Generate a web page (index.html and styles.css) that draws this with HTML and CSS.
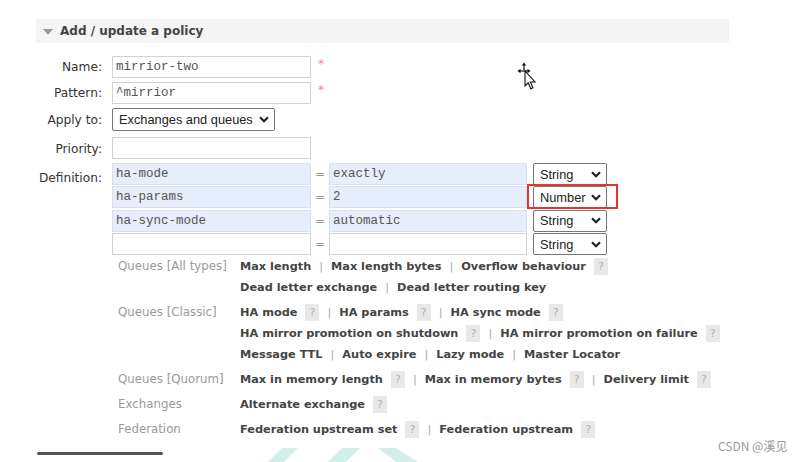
FILE: index.html
```html
<!DOCTYPE html>
<html>
<head>
<meta charset="utf-8">
<link rel="stylesheet" href="styles.css">
</head>
<body>
<div class="page">
  <section class="panel">
    <h2 class="panel-head"><span class="tri"></span>Add / update a policy</h2>

    <div class="form">
      <div class="lbl">Name:</div>
      <div class="field"><div class="txt mono w200">mirrior-two</div><span class="req">*</span></div>

      <div class="lbl">Pattern:</div>
      <div class="field"><div class="txt mono w200">^mirrior</div><span class="req">*</span></div>

      <div class="lbl">Apply to:</div>
      <div class="field"><div class="sel wide"><span>Exchanges and queues</span><svg class="chev" width="10" height="7" viewBox="0 0 10 7"><path d="M1 1.2 L5 5.2 L9 1.2" fill="none" stroke="#222" stroke-width="2.2"/></svg></div></div>

      <div class="lbl lbl-pri">Priority:</div>
      <div class="field field-pri"><div class="txt mono w200"></div></div>

      <div class="lbl lbl-def">Definition:</div>
      <div class="defs">
        <div class="def-row">
          <div class="txt mono key">ha-mode</div><span class="eq">=</span><div class="txt mono val">exactly</div>
          <div class="sel type"><span>String</span><svg class="chev" width="10" height="7" viewBox="0 0 10 7"><path d="M1 1.2 L5 5.2 L9 1.2" fill="none" stroke="#222" stroke-width="2.2"/></svg></div>
        </div>
        <div class="def-row">
          <div class="txt mono key">ha-params</div><span class="eq">=</span><div class="txt mono val">2</div>
          <div class="sel type marked"><span>Number</span><svg class="chev" width="10" height="7" viewBox="0 0 10 7"><path d="M1 1.2 L5 5.2 L9 1.2" fill="none" stroke="#222" stroke-width="2.2"/></svg><span class="redbox"></span></div>
        </div>
        <div class="def-row">
          <div class="txt mono key">ha-sync-mode</div><span class="eq">=</span><div class="txt mono val">automatic</div>
          <div class="sel type"><span>String</span><svg class="chev" width="10" height="7" viewBox="0 0 10 7"><path d="M1 1.2 L5 5.2 L9 1.2" fill="none" stroke="#222" stroke-width="2.2"/></svg></div>
        </div>
        <div class="def-row">
          <div class="txt mono key blank"></div><span class="eq">=</span><div class="txt mono val blank"></div>
          <div class="sel type"><span>String</span><svg class="chev" width="10" height="7" viewBox="0 0 10 7"><path d="M1 1.2 L5 5.2 L9 1.2" fill="none" stroke="#222" stroke-width="2.2"/></svg></div>
        </div>
      </div>
    </div>

    <div class="help">
      <div class="hgroup">
        <div class="hlbl">Queues [All types]</div>
        <div class="hlinks">
          <div class="hline"><b>Max length</b><i>|</i><b>Max length bytes</b><i>|</i><b>Overflow behaviour</b><span class="q">?</span></div>
          <div class="hline"><b>Dead letter exchange</b><i>|</i><b>Dead letter routing key</b></div>
        </div>
      </div>
      <div class="hgroup">
        <div class="hlbl">Queues [Classic]</div>
        <div class="hlinks">
          <div class="hline"><b>HA mode</b><span class="q">?</span><i>|</i><b>HA params</b><span class="q">?</span><i>|</i><b>HA sync mode</b><span class="q">?</span></div>
          <div class="hline"><b>HA mirror promotion on shutdown</b><span class="q">?</span><i>|</i><b>HA mirror promotion on failure</b><span class="q">?</span></div>
          <div class="hline"><b>Message TTL</b><i>|</i><b>Auto expire</b><i>|</i><b>Lazy mode</b><i>|</i><b>Master Locator</b></div>
        </div>
      </div>
      <div class="hgroup">
        <div class="hlbl">Queues [Quorum]</div>
        <div class="hlinks">
          <div class="hline"><b>Max in memory length</b><span class="q">?</span><i>|</i><b>Max in memory bytes</b><span class="q">?</span><i>|</i><b>Delivery limit</b><span class="q">?</span></div>
        </div>
      </div>
      <div class="hgroup">
        <div class="hlbl">Exchanges</div>
        <div class="hlinks">
          <div class="hline"><b>Alternate exchange</b><span class="q">?</span></div>
        </div>
      </div>
      <div class="hgroup">
        <div class="hlbl">Federation</div>
        <div class="hlinks">
          <div class="hline"><b>Federation upstream set</b><span class="q">?</span><i>|</i><b>Federation upstream</b><span class="q">?</span></div>
        </div>
      </div>
    </div>
  </section>

  <div class="bottom-rule"></div>
</div>

<svg class="cursor" width="24" height="30" viewBox="0 0 24 30">
  <g fill="#111">
    <path d="M7 1.5 L4.8 4.5 L9.2 4.5 Z"/>
    <path d="M0.5 10 L3.5 7.8 L3.5 12.2 Z"/>
    <path d="M13.5 10 L10.5 7.8 L10.5 12.2 Z"/>
    <rect x="6.4" y="4" width="1.2" height="5"/>
    <rect x="3" y="9.4" width="8" height="1.2"/>
  </g>
  <path d="M8 10 L8 25 L11.2 21.8 L13.8 27.8 L16 26.8 L13.4 21 L18 21 Z" fill="#fff" stroke="#111" stroke-width="1.1"/>
</svg>

<svg class="teal" width="180" height="16" viewBox="0 0 180 16">
  <path d="M6 16 L20 2 L36 2 L22 16 Z" fill="#d3efe9"/>
  <path d="M66 16 L80 2 L98 2 L84 16 Z" fill="#d3efe9"/>
  <path d="M116 2 L134 2 L156 16 L134 16 Z" fill="#d3efe9"/>
</svg>

<div class="watermark">CSDN @溪见</div>
</body>
</html>
```

FILE: styles.css
```css
html, body {
  margin: 0;
  padding: 0;
  background: #fff;
}
body {
  font-family: "DejaVu Sans", Verdana, sans-serif;
  color: #444;
  width: 801px;
  height: 462px;
  overflow: hidden;
  position: relative;
}
.page {
  padding-top: 19px;
}
.panel {
  margin: 0;
}
.panel-head {
  margin: 0 0 0 36px;
  width: 693px;
  height: 24px;
  background: #f5f5f5;
  display: flex;
  align-items: center;
  font-size: 12px;
  font-weight: bold;
  color: #444;
  box-sizing: border-box;
  padding-left: 7px;
}
.tri {
  width: 0;
  height: 0;
  border-left: 5px solid transparent;
  border-right: 5px solid transparent;
  border-top: 6px solid #999;
  margin-right: 7px;
  margin-top: 1px;
}

/* form */
.form {
  display: grid;
  grid-template-columns: 102px 1fr;
  column-gap: 10px;
  row-gap: 4px;
  margin-top: 13px;
  font-size: 12.2px;
}
.lbl {
  text-align: right;
  align-self: center;
  color: #333;
  white-space: nowrap;
}
.lbl-pri {
  margin-top: 4px;
}
.field-pri {
  margin-top: 2px;
}
.lbl-def {
  align-self: start;
  margin-top: 8px;
}
.field {
  display: flex;
  align-items: flex-start;
}
.txt {
  box-sizing: border-box;
  height: 22px;
  border: 1px solid #d2d2d2;
  background: #fff;
  padding: 0 3px;
  display: flex;
  align-items: center;
  color: #555;
  white-space: nowrap;
}
.mono {
  font-family: "Liberation Mono", "Courier New", monospace;
  font-size: 12.5px;
}
.w200 {
  width: 199px;
}
.req {
  color: #f08a8a;
  font-size: 12px;
  margin-left: 7px;
  margin-top: 1px;
}
.sel {
  box-sizing: border-box;
  height: 23px;
  border: 1px solid #767676;
  border-radius: 2px;
  background: #fff;
  display: flex;
  align-items: center;
  justify-content: space-between;
  font-family: "Liberation Sans", Arial, sans-serif;
  font-size: 12.8px;
  color: #222;
  padding: 0 5px 0 6px;
  position: relative;
  white-space: nowrap;
}
.wide {
  width: 163px;
}
.chev {
  flex: none;
}

/* definitions */
.defs {
  display: flex;
  flex-direction: column;
  gap: 1.4px;
  margin-top: 0;
}
.def-row {
  display: flex;
  align-items: center;
}
.key, .val {
  background: #e6eefb;
  border-color: #d6e0f0;
}
.key {
  width: 199px;
}
.val {
  width: 198px;
}
.key.blank, .val.blank {
  background: #fff;
  border-color: #d2d2d2;
}
.eq {
  width: 18px;
  text-align: center;
  color: #999;
  font-size: 12px;
}
.type {
  width: 74px;
  height: 22px;
  margin-left: 6px;
  font-size: 12.8px;
}
.redbox {
  position: absolute;
  left: -7px;
  top: -3px;
  width: 91px;
  height: 25px;
  border: 2px solid #e2372f;
  box-sizing: border-box;
}

/* help */
.help {
  margin: 1px 0 0 118px;
  font-size: 11.3px;
}
.hgroup {
  display: flex;
  margin-bottom: 4px;
}
.hlbl {
  width: 122px;
  flex: none;
  color: #9a9a9a;
  line-height: 21px;
  font-size: 11.8px;
  white-space: nowrap;
}
.hlinks {
  display: flex;
  flex-direction: column;
}
.hline {
  display: flex;
  align-items: center;
  height: 21px;
  white-space: nowrap;
}
.hline b {
  color: #444;
  font-weight: bold;
}
.hline i {
  font-style: normal;
  color: #aaa;
  margin: 0 8px;
}
.q {
  display: inline-block;
  background: #e8e8e8;
  color: #b0b0b0;
  width: 14px;
  height: 17px;
  line-height: 17px;
  text-align: center;
  margin-left: 8px;
  font-size: 11px;
}

.bottom-rule {
  position: absolute;
  left: 37px;
  top: 452px;
  width: 126px;
  height: 3px;
  border-radius: 2px;
  background: #555;
}
.cursor {
  position: absolute;
  left: 517px;
  top: 61px;
}
.teal {
  position: absolute;
  left: 262px;
  top: 446px;
}
.watermark {
  position: absolute;
  left: 718px;
  top: 437px;
  font-family: "Noto Sans CJK SC", "Noto Sans", sans-serif;
  font-size: 12px;
  color: #9a9a9a;
}
```
